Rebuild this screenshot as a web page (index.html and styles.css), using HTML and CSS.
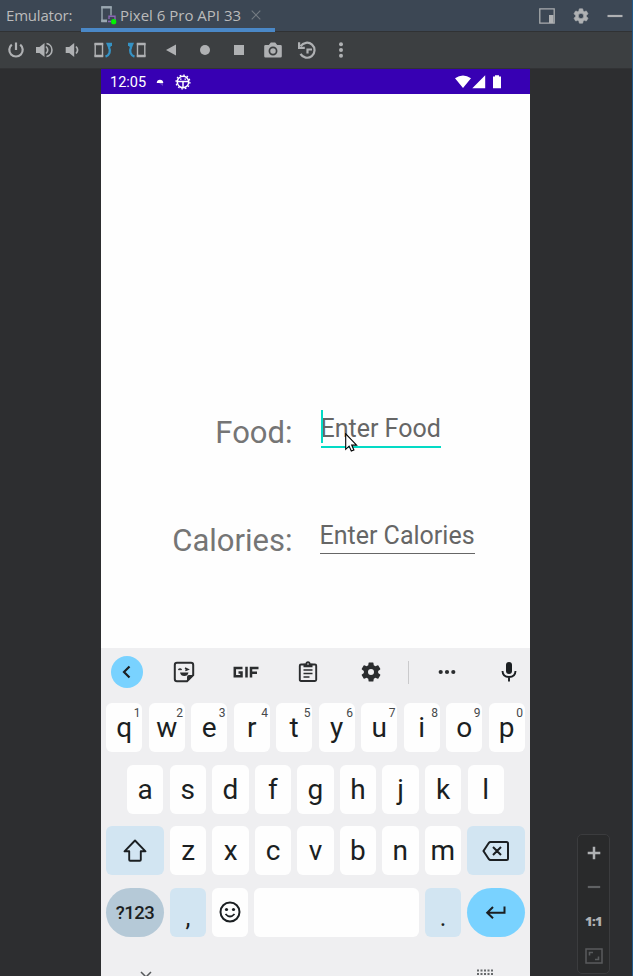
FILE: index.html
```html
<!DOCTYPE html>
<html lang="en">
<head>
<meta charset="utf-8">
<title>Emulator</title>
<link rel="stylesheet" href="styles.css">
</head>
<body>
<div class="window">
  <header class="titlebar">
    <span class="title">Emulator:</span>
    <div class="tab">
      <svg class="device" width="18" height="20" viewBox="0 0 18 20"><path d="M7 16.500H2V2h9v8.500" fill="none" stroke="#9aa7b0" stroke-width="1.400"/><path d="M1.300 1.300h10.400v2.200H1.300zM1.300 14.500H7v2.500H1.300z" fill="#9aa7b0"/><path d="M9 14v-2.800h6V15M8 16.500h3" fill="none" stroke="#8a67b5" stroke-width="1.400"/><circle cx="13.700" cy="16.700" r="2.600" fill="#00f500"/></svg>
      <span class="tab-name">Pixel 6 Pro API 33</span>
      <svg class="close" width="10" height="10" viewBox="0 0 10 10"><path d="M.7.7l8.600 8.600M9.300.7L.7 9.300" stroke="#747b82" stroke-width="1.100"/></svg>
    </div>
    <div class="window-actions">
      <svg width="16" height="16" viewBox="0 0 16 16"><path d="M.8.8h14.400v14.400H.8z" fill="none" stroke="#a9acae" stroke-width="1.300"/><path d="M10 7h4.500v8H10z" fill="#afb1b3"/></svg>
      <svg width="18" height="18" viewBox="0 0 24 24"><path fill="#afb1b3" stroke="#afb1b3" stroke-width=".8" d="M19.140 12.940c.04-.3.06-.61.06-.94s-.02-.64-.07-.94l2.030-1.580a.49.490 0 0 0 .12-.61l-1.920-3.320a.49.490 0 0 0-.59-.22l-2.390.96a7 7 0 0 0-1.620-.94L14.400 2.810a.48.480 0 0 0-.48-.41h-3.840a.47.470 0 0 0-.47.410L9.250 5.350a7.200 7.200 0 0 0-1.620.94l-2.390-.96a.48.480 0 0 0-.59.220L2.740 8.870a.47.470 0 0 0 .12.610l2.030 1.580a6 6 0 0 0 0 1.880l-2.030 1.580a.49.490 0 0 0-.12.610l1.920 3.320c.12.220.37.290.59.220l2.390-.96c.5.380 1.030.7 1.620.94l.36 2.540c.05.240.24.410.48.410h3.840c.24 0 .44-.17.470-.41l.36-2.540a7 7 0 0 0 1.620-.94l2.390.96c.22.080.47 0 .59-.22l1.920-3.320a.47.470 0 0 0-.12-.61zM12 15.600a3.600 3.600 0 1 1 0-7.200 3.600 3.600 0 0 1 0 7.200z"/></svg>
      <svg width="16" height="16" viewBox="0 0 16 16"><path d="M.5 8h15" stroke="#afb1b3" stroke-width="2.200"/></svg>
    </div>
  </header>

  <nav class="toolbar">
    <svg class="narrow" width="18" height="18" viewBox="0 0 18 18"><path d="M4.800 3.600a6.700 6.700 0 1 0 8.400 0M9 1.500V9" fill="none" stroke="#afb1b3" stroke-width="2.200"/></svg>
    <svg class="narrow" width="18" height="18" viewBox="0 0 18 18"><path d="M1 6h3.500l5-4v14l-5-4H1z" fill="#afb1b3"/><path d="M11 5.500q3.500 3.500 0 7M11.500 2.500a6.600 6.600 0 0 1 0 13" fill="none" stroke="#afb1b3" stroke-width="1.600"/></svg>
    <svg class="narrow" width="18" height="18" viewBox="0 0 18 18"><path d="M2.700 6h3.500l5-4v14l-5-4H2.700z" fill="#afb1b3"/><path d="M13 5.500q3.200 3.500 0 7" fill="none" stroke="#afb1b3" stroke-width="1.700"/></svg>
    <svg class="medium" width="18" height="18" viewBox="0 0 18 18"><path d="M1.200 3h7.300v12H1.200z" fill="none" stroke="#afb1b3" stroke-width="1.400"/><path d="M.5 1.700h8.700v2.600H.5zM.5 13.700h8.700v2.600H.5z" fill="#afb1b3"/><path d="M11.500 15.700c4-1.500 5.500-5.500 3.500-9.500" fill="none" stroke="#3592c4" stroke-width="2.300"/><path d="M12 1.700h6v2.500l-3.500 3.500z" fill="#3592c4"/></svg>
    <svg class="after" width="18" height="18" viewBox="0 0 18 18"><path d="M9.500 3h7.300v12H9.500z" fill="none" stroke="#afb1b3" stroke-width="1.400"/><path d="M8.800 1.700h8.700v2.600H8.800zM8.800 13.700h8.700v2.600H8.800z" fill="#afb1b3"/><path d="M6.500 15.700c-4-1.500-5.500-5.500-3.500-9.500" fill="none" stroke="#3592c4" stroke-width="2.300"/><path d="M6 1.700H0v2.500l3.500 3.500z" fill="#3592c4"/></svg>
    <svg width="18" height="18" viewBox="0 0 18 18"><path d="M14 3.500v11L4 9z" fill="#afb1b3"/></svg>
    <svg width="18" height="18" viewBox="0 0 18 18"><circle cx="9" cy="9" r="5" fill="#afb1b3"/></svg>
    <svg width="18" height="18" viewBox="0 0 18 18"><path d="M4 4h10v10H4z" fill="#afb1b3"/></svg>
    <svg width="20" height="18" viewBox="0 0 20 18"><path d="M2.500 4h3.300l2-2.500h4.400l2 2.500h3.300q1.300 0 1.300 1.300v10q0 1.300-1.300 1.300h-15q-1.300 0-1.300-1.300v-10Q1.200 4 2.500 4z" fill="#afb1b3"/><circle cx="10" cy="10" r="3.600" fill="#afb1b3" stroke="#3c3f41" stroke-width="1.700"/></svg>
    <svg width="20" height="18" viewBox="0 0 20 18"><path d="M3.700 5.200a7.500 7.500 0 1 1-.2 7.700M2.100 1.200v5.600h5.700M10.500 12.500V8.500H15" fill="none" stroke="#afb1b3" stroke-width="2.200"/></svg>
    <svg width="18" height="18" viewBox="0 0 18 18" fill="#afb1b3"><circle cx="9" cy="3.300" r="2"/><circle cx="9" cy="9" r="2"/><circle cx="9" cy="14.700" r="2"/></svg>
  </nav>

  <main class="workspace">
    <section class="phone">
      <div class="status">
        <span class="clock">12:05</span>
        <svg class="dot" width="8" height="8" viewBox="0 0 8 8"><path d="M.7 5q.3-3.300 3.300-3.300T7.300 5z" fill="#fff"/><path d="M3 5h4v3z" fill="#fff" opacity=".25"/></svg>
        <svg class="bug" width="16" height="16" viewBox="0 0 16 16"><circle cx="8" cy="8" r="5.700" fill="none" stroke="#fff" stroke-width="1.500"/><circle cx="8" cy="8" r="6.900" fill="none" stroke="#fff" stroke-width="1.300" stroke-dasharray="1.700 1.910"/><path d="M2.500 7.500h11M8 7.500V13" stroke="#fff" stroke-width="1.500"/><path d="M5 5.200h1.500M9.500 5.200H11" stroke="#fff" stroke-width="1.200"/></svg>
        <svg class="signals" width="48" height="14" viewBox="0 0 48 14" fill="#fff"><path d="M0 3.300Q8-2.300 16 3.300L8 13zM17.300 13.200H30.200V.3zM38 1.500h2V.2h4v1.300h2v11.700h-8z"/></svg>
      </div>

      <div class="form">
        <span class="label">Food:</span>
        <div class="cell"><div class="field focused"><span>Enter Food</span>
          <svg class="pointer" width="14" height="20" viewBox="0 0 14 20"><path d="M.7.800v15.500l3.400-3.200 2.200 4.900 2.600-1.100-2.200-4.800h4.900z" fill="#fff" stroke="#000" stroke-width="1.100"/></svg>
        </div></div>
        <span class="label wide">Calories:</span>
        <div class="cell"><div class="field">Enter Calories</div></div>
      </div>

      <div class="keyboard">
        <div class="suggestions">
          <span class="back"><svg width="32" height="32" viewBox="0 0 32 32"><path d="M18.500 10.500L13 16l5.500 5.500" fill="none" stroke="#1b1f22" stroke-width="2.200"/></svg></span>
          <svg class="sticker" width="22" height="22" viewBox="0 0 22 22"><path d="M4 1.800h14q2.200 0 2.200 2.200v10l-6.200 6.200H4Q1.800 20.200 1.800 18V4Q1.800 1.800 4 1.800z" fill="none" stroke="#2b2d2f" stroke-width="2"/><path d="M14 20.500V16q0-2 2-2h4.500z" fill="#2b2d2f"/><path d="M7 11.500h8.500q-.7 3.500-4.200 3.500T7 11.500z" fill="#2b2d2f"/><path d="M5.500 9q1.500-2 3 0M12 7l3 1.500-2.700 1" fill="none" stroke="#2b2d2f" stroke-width="1.500"/></svg>
          <svg class="gif" width="28" height="14" viewBox="0 0 28 14"><path d="M10.500 3H2.800v8.300h6.700V7.500H6.500M14.500 1.800v10.700M19 12.500V3h7.500M19 7.700h6" fill="none" stroke="#2b2d2f" stroke-width="2.500"/></svg>
          <svg class="clipboard" width="20" height="22" viewBox="0 0 20 22"><path d="M3 3.500h14q1.200 0 1.200 1.200v14.100q0 1.200-1.200 1.200H3q-1.200 0-1.200-1.200V4.700Q1.800 3.500 3 3.500z" fill="none" stroke="#2b2d2f" stroke-width="1.900"/><path d="M5.500 2.700h2a2.500 2.500 0 0 1 5 0h2v3.600h-9z" fill="#2b2d2f"/><circle cx="10" cy="3" r=".8" fill="#efeff1"/><path d="M5.500 9h9M5.500 12.500h9M5.500 16h6" stroke="#2b2d2f" stroke-width="1.700"/></svg>
          <svg class="gear" width="24" height="24" viewBox="0 0 24 24"><path fill="#2b2d2f" d="M19.140 12.940c.04-.3.060-.61.060-.94s-.02-.64-.07-.94l2.030-1.580a.49.490 0 0 0 .12-.61l-1.920-3.320a.49.490 0 0 0-.59-.22l-2.390.96a7 7 0 0 0-1.620-.94L14.400 2.810a.48.480 0 0 0-.48-.41h-3.840a.47.470 0 0 0-.47.410L9.250 5.350a7.200 7.200 0 0 0-1.620.94l-2.390-.96a.48.480 0 0 0-.59.220L2.740 8.870a.47.470 0 0 0 .12.610l2.030 1.580a6 6 0 0 0 0 1.880l-2.030 1.580a.49.490 0 0 0-.12.610l1.920 3.320c.12.220.37.290.59.220l2.390-.96c.5.380 1.030.7 1.620.94l.36 2.540c.05.240.24.410.48.410h3.840c.24 0 .44-.17.470-.41l.36-2.540a7 7 0 0 0 1.620-.94l2.390.96c.22.080.47 0 .59-.22l1.920-3.320a.47.470 0 0 0-.12-.61zM12 15a3 3 0 1 1 0-6 3 3 0 0 1 0 6z"/></svg>
          <span class="divider"></span>
          <svg class="more" width="18" height="6" viewBox="0 0 18 6" fill="#2b2d2f"><circle cx="2.700" cy="3" r="2.100"/><circle cx="9" cy="3" r="2.100"/><circle cx="15.300" cy="3" r="2.100"/></svg>
          <svg class="mic" width="16" height="22" viewBox="0 0 16 22"><rect x="5" y="1" width="6" height="12" rx="3" fill="#1b1f22"/><path d="M1.500 10q.2 6 6.500 6t6.500-6M8 16v4.500" fill="none" stroke="#1b1f22" stroke-width="1.900"/></svg>
        </div>
        <div class="row">
          <span class="key">q<sup>1</sup></span><span class="key">w<sup>2</sup></span><span class="key">e<sup>3</sup></span><span class="key">r<sup>4</sup></span><span class="key">t<sup>5</sup></span><span class="key">y<sup>6</sup></span><span class="key">u<sup>7</sup></span><span class="key">i<sup>8</sup></span><span class="key">o<sup>9</sup></span><span class="key">p<sup>0</sup></span>
        </div>
        <div class="row">
          <span class="key">a</span><span class="key">s</span><span class="key">d</span><span class="key">f</span><span class="key">g</span><span class="key">h</span><span class="key">j</span><span class="key">k</span><span class="key">l</span>
        </div>
        <div class="row">
          <span class="key large tint"><svg width="26" height="26" viewBox="0 0 26 26"><path d="M13 2.500L2.500 13.300h4.700v8.500q0 1 1 1h9.600q1 0 1-1v-8.500h4.700z" fill="none" stroke="#1b1f22" stroke-width="1.900" stroke-linejoin="round"/></svg></span><span class="key">z</span><span class="key">x</span><span class="key">c</span><span class="key">v</span><span class="key">b</span><span class="key">n</span><span class="key">m</span><span class="key large tint"><svg width="28" height="24" viewBox="0 0 28 24"><path d="M8.500 3h16q1.500 0 1.500 1.500v15q0 1.500-1.500 1.500h-16q-1 0-1.600-.8L1.500 12l5.400-8.200Q7.500 3 8.500 3zM11 8l8 8M19 8l-8 8" fill="none" stroke="#1b1f22" stroke-width="2"/></svg></span>
        </div>
        <div class="row">
          <span class="key large symbols">?123</span><span class="key tint punct">,</span><span class="key"><svg width="24" height="24" viewBox="0 0 24 24"><circle cx="12" cy="12" r="9.500" fill="none" stroke="#1b1f22" stroke-width="2"/><circle cx="8.500" cy="9.500" r="1.600" fill="#1b1f22"/><circle cx="15.500" cy="9.500" r="1.600" fill="#1b1f22"/><path d="M7.500 14q4.500 5 9 0" fill="none" stroke="#1b1f22" stroke-width="1.800"/></svg></span><span class="key space"></span><span class="key tint punct">.</span><span class="key large enter"><svg width="24" height="20" viewBox="0 0 24 20"><path d="M20.500 4.500v6.300H3.500M9 5L3.200 10.800l5.800 5.500" fill="none" stroke="#1b1f22" stroke-width="2"/></svg></span>
        </div>
        <div class="nav-row">
          <svg width="14" height="8" viewBox="0 0 14 8"><path d="M2 1l5 5 5-5" fill="none" stroke="#55585a" stroke-width="1.500"/></svg>
          <svg class="grid" width="18" height="10" viewBox="0 0 18 10"><path d="M1 1.500h16M1 5h16M1 8.500h16" stroke="#66696b" stroke-width="1.800" stroke-dasharray="2 1.500"/></svg>
        </div>
      </div>
    </section>

    <aside class="zoom">
      <svg width="14" height="14" viewBox="0 0 14 14"><path d="M7 .7v12.600M.7 7h12.600" stroke="#afb1b3" stroke-width="2.500"/></svg>
      <svg class="minus" width="14" height="4" viewBox="0 0 14 4"><path d="M.8 2h12.400" stroke="#606264" stroke-width="2.200"/></svg>
      <span class="ratio">1:1</span>
      <svg class="fit" width="18" height="16" viewBox="0 0 18 16"><path d="M1 1h16v14H1z" fill="none" stroke="#595b5d" stroke-width="1.500"/><path d="M4.500 7.500V4.500H8M10 11.500h3.500v-3" fill="none" stroke="#595b5d" stroke-width="1.600"/></svg>
    </aside>
  </main>
</div>
</body>
</html>
```
FILE: styles.css
```css
* { box-sizing: border-box; }
body { margin: 0; }
svg { display: block; flex: none; }

.window {
  width: 633px;
  height: 976px;
  overflow: hidden;
  display: flex;
  flex-direction: column;
  background: #2d2e30;
  border-right: 1px solid #20598a;
  font-family: "Open Sans", sans-serif;
}

.titlebar {
  height: 32px;
  flex: none;
  display: flex;
  background: #3c4754;
  border-bottom: 1px solid #303234;
  color: #bbbbbb;
  font-size: 15px;
  line-height: 31px;
  white-space: nowrap;
}
.title { width: 75px; padding-left: 6px; letter-spacing: -0.2px; }
.tab {
  width: 194px;
  height: 32px;
  margin-left: 6px;
  padding-left: 18px;
  display: flex;
  border-bottom: 4px solid #4a88c7;
}
.device { margin: 5px 2px 0 1px; }
.tab-name { width: 123px; letter-spacing: 0; }
.close { margin: 10px 0 0 8px; }
.window-actions {
  flex: 1;
  display: flex;
  align-items: center;
  justify-content: flex-end;
  gap: 17px;
  padding-right: 9px;
}

.toolbar {
  height: 37px;
  flex: none;
  display: flex;
  align-items: center;
  padding-left: 2px;
  background: #3c3f41;
  border-bottom: 1px solid #323335;
}
.toolbar svg { width: 34px; }
.toolbar .narrow { width: 28px; }
.toolbar .medium { width: 34px; }

.workspace { flex: 1; display: flex; padding-left: 101px; min-height: 0; }
.phone {
  width: 429px;
  display: flex;
  flex-direction: column;
  background: #fefefe;
  font-family: Roboto, sans-serif;
  overflow: hidden;
}
.status {
  height: 25px;
  flex: none;
  display: flex;
  align-items: center;
  background: #3700b3;
  color: #fff;
  padding: 0 27px 0 8px;
}
.clock { width: 38px; font-size: 14.500px; line-height: 22px; padding: 2px 0 0 1px; }
.dot { margin-left: 9px; }
.bug { margin-left: 11px; }
.signals { margin-left: auto; }

.form {
  height: 554px;
  flex: none;
  display: grid;
  grid-template-columns: 191.500px 1fr;
  grid-template-rows: 107px 40px;
  column-gap: 27px;
  padding-top: 316px;
}
.label {
  padding-top: 3px;
  text-align: right;
  color: #757575;
  font-size: 31px;
  line-height: 40px;
}
.label.wide { padding-top: 4px; }
.cell { display: flex; align-items: flex-start; }
.field {
  position: relative;
  height: 37px;
  color: #666;
  font-size: 25px;
  line-height: 38px;
  border-bottom: 1px solid #666;
  white-space: nowrap;
}
.focused { height: 38px; border-bottom: 2px solid #03dac5; margin-left: 1px; }
.focused::before {
  content: "";
  position: absolute;
  left: 0.500px;
  top: 0;
  width: 2px;
  height: 33px;
  background: #03dac5;
}
.pointer { position: absolute; left: 24px; top: 23px; }

.keyboard {
  flex: 1;
  display: flex;
  flex-direction: column;
  gap: 12.500px;
  background: #efeff1;
  color: #1b1f22;
}
.suggestions {
  height: 48px;
  flex: none;
  margin-bottom: -5.500px;
  display: flex;
  align-items: center;
  padding-left: 10px;
}
.back { width: 32px; height: 32px; border-radius: 50%; background: #79d2ff; }
.sticker { margin-left: 30px; }
.gif { margin-left: 37px; }
.clipboard { margin-left: 38px; }
.gear { margin-left: 40.500px; }
.divider { width: 1px; height: 23px; margin-left: 25.500px; background: #cacacc; }
.more { margin-left: 28.500px; }
.mic { margin-left: 45.500px; }

.row { display: flex; flex: none; justify-content: space-between; height: 49px; padding: 0 5px; }
.row:nth-child(3) { padding: 0 26px; }
.key {
  position: relative;
  width: 36.400px;
  display: flex;
  align-items: center;
  justify-content: center;
  border-radius: 6px;
  background: #fefefe;
  font-size: 28px;
  line-height: 49px;
}
.key sup {
  position: absolute;
  right: 2px;
  top: 2px;
  font-size: 12px;
  line-height: 16px;
  color: #45484a;
}
.large { width: 58px; }
.tint { background: #d2e5f2; }
.symbols { border-radius: 25px; background: #b5c9d7; font-size: 18.500px; font-weight: 500; letter-spacing: -0.5px; padding-top: 2px; }
.punct { padding-top: 10px; font-size: 25px; }
.space { width: 165px; }
.enter { border-radius: 25px; background: #79d2ff; }
.nav-row { display: flex; justify-content: space-between; padding: 22px 36px 0 38px; }
.grid { margin-top: -2px; }

.zoom {
  width: 33px;
  height: 140px;
  margin: 765px 0 0 47px;
  padding-top: 11px;
  display: flex;
  flex-direction: column;
  align-items: center;
  background: #292a2b;
  border: 1px solid #3b3c3e;
  border-radius: 5px;
}
.minus { margin-top: 25px; }
.ratio { margin-top: 25px; color: #afb1b3; font-size: 13px; font-weight: 800; line-height: 14px; letter-spacing: -0.7px; }
.fit { margin-top: 20px; }
```
